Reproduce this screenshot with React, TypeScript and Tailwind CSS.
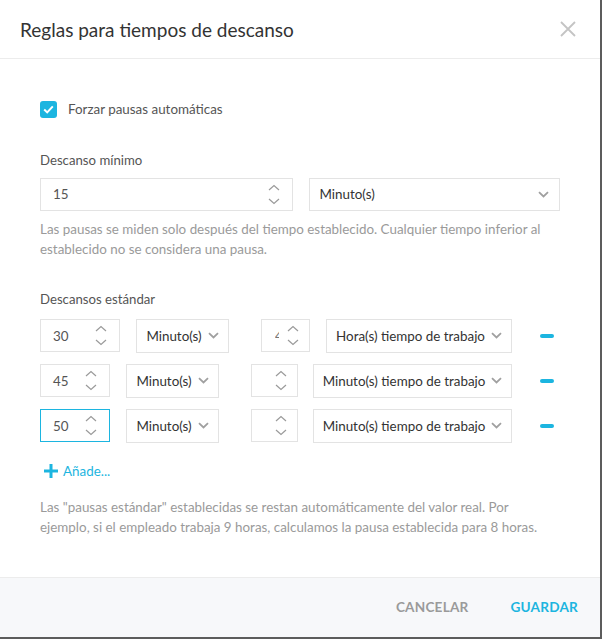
import React from "react";

const font = { fontFamily: "Lato, 'Liberation Sans', sans-serif" };

function Spinner() {
  return (
    <div className="flex flex-col items-center gap-[7px]">
      <svg width="12" height="7" viewBox="0 0 12 7" fill="none">
        <path d="M1 6L6 1.5L11 6" stroke="#9a9a9a" strokeWidth="1.2" />
      </svg>
      <svg width="12" height="7" viewBox="0 0 12 7" fill="none">
        <path d="M1 1L6 5.5L11 1" stroke="#9a9a9a" strokeWidth="1.2" />
      </svg>
    </div>
  );
}

function Chevron() {
  return (
    <svg width="11" height="7" viewBox="0 0 11 7" fill="none">
      <path d="M1 1.2L5.5 5.5L10 1.2" stroke="#a0a0a0" strokeWidth="1.8" />
    </svg>
  );
}

function NumInput({
  w,
  value,
  focus,
  padR = "pr-[12px]",
  clipped,
}: {
  w: string;
  value: string;
  focus?: boolean;
  padR?: string;
  clipped?: boolean;
}) {
  return (
    <div
      className={`${w} h-[33px] flex items-center justify-between pl-[12px] ${padR} bg-white border ${
        focus ? "border-[#1cb5e0]" : "border-[#e3e3e3]"
      }`}
    >
      {clipped ? (
        <span className="w-[4px] overflow-hidden text-[13.4px] text-[#777] ml-[1px]">4</span>
      ) : (
        <span className="text-[13.4px] text-[#555]">{value}</span>
      )}
      <Spinner />
    </div>
  );
}

function Select({ w, label }: { w: string; label: string }) {
  return (
    <div className={`${w} h-[34px] flex items-center justify-center gap-[6px] bg-white border border-[#e3e3e3]`}>
      <span className="text-[13.4px] text-[#333] whitespace-nowrap">{label}</span>
      <Chevron />
    </div>
  );
}

function Minus() {
  return <div className="w-[14px] h-[4px] rounded-[2px] bg-[#1cb5e0]" />;
}

export default function App() {
  return (
    <div className="w-[602px] h-[639px] bg-[#5c5c5c]" style={font}>
      <div className="w-[600px] h-[637px] bg-white flex flex-col">
        <div className="h-[59px] border-b border-[#ececec] flex items-center justify-between pl-[20px] pr-[24px]">
          <span className="text-[19px] text-[#333] leading-none">Reglas para tiempos de descanso</span>
          <svg width="16" height="16" viewBox="0 0 16 16" fill="none">
            <path d="M1 1L15 15M15 1L1 15" stroke="#c4c4c4" strokeWidth="1.8" />
          </svg>
        </div>

        <div className="flex flex-col px-[40px] pt-[40px]">
          <div className="flex items-center gap-[11px]">
            <div className="w-[17px] h-[17px] rounded-[3px] bg-[#1cb5e0] flex items-center justify-center">
              <svg width="11" height="9" viewBox="0 0 11 9" fill="none">
                <path d="M1.2 4.6L4.2 7.4L9.8 1.4" stroke="white" strokeWidth="2" />
              </svg>
            </div>
            <span className="text-[13.4px] text-[#555]">Forzar pausas automáticas</span>
          </div>

          <div className="mt-[32px] text-[13.2px] text-[#555]">Descanso mínimo</div>
          <div className="mt-[7px] flex gap-[16px]">
            <NumInput w="w-[253px]" value="15" />
            <div className="w-[252px] h-[33px] flex items-center justify-between px-[10px] bg-white border border-[#e3e3e3]">
              <span className="text-[13.4px] text-[#333]">Minuto(s)</span>
              <Chevron />
            </div>
          </div>
          <p className="mt-[8px] text-[13.4px] leading-[20px] text-[#9a9a9a]">
            Las pausas se miden solo después del tiempo establecido. Cualquier tiempo inferior al establecido no se
            considera una pausa.
          </p>

          <div className="mt-[31px] text-[13.2px] text-[#555]">Descansos estándar</div>
          <div className="mt-[9px] flex flex-col gap-[11px]">
            <div className="flex items-center">
              <NumInput w="w-[80px]" value="30" />
              <div className="w-[16px]" />
              <Select w="w-[93px]" label="Minuto(s)" />
              <div className="w-[32px]" />
              <NumInput w="w-[49px]" value="" padR="pr-[10px]" clipped />
              <div className="w-[16px]" />
              <Select w="w-[186px]" label="Hora(s) tiempo de trabajo" />
              <div className="w-[28px]" />
              <Minus />
            </div>
            <div className="flex items-center">
              <NumInput w="w-[70px]" value="45" />
              <div className="w-[16px]" />
              <Select w="w-[93px]" label="Minuto(s)" />
              <div className="w-[32px]" />
              <NumInput w="w-[47px]" value="" padR="pr-[10px]" />
              <div className="w-[15px]" />
              <Select w="w-[199px]" label="Minuto(s) tiempo de trabajo" />
              <div className="w-[28px]" />
              <Minus />
            </div>
            <div className="flex items-center">
              <NumInput w="w-[70px]" value="50" focus />
              <div className="w-[16px]" />
              <Select w="w-[93px]" label="Minuto(s)" />
              <div className="w-[32px]" />
              <NumInput w="w-[47px]" value="" padR="pr-[10px]" />
              <div className="w-[15px]" />
              <Select w="w-[199px]" label="Minuto(s) tiempo de trabajo" />
              <div className="w-[28px]" />
              <Minus />
            </div>
          </div>

          <div className="mt-[18px] flex items-center gap-[5px] pl-[4px]">
            <svg width="14" height="14" viewBox="0 0 14 14">
              <path d="M5.5 0H8.5V5.5H14V8.5H8.5V14H5.5V8.5H0V5.5H5.5Z" fill="#1cb5e0" />
            </svg>
            <span className="text-[13.4px] text-[#1cb5e0]">Añade...</span>
          </div>

          <p className="mt-[16px] text-[13.4px] leading-[20px] text-[#9a9a9a]">
            Las "pausas estándar" establecidas se restan automáticamente del valor real. Por ejemplo, si el empleado
            trabaja 9 horas, calculamos la pausa establecida para 8 horas.
          </p>
        </div>

        <div className="mt-auto h-[60px] border-t border-[#ececec] bg-[#f7f8fa] flex items-center justify-end gap-[42px] pr-[22px]">
          <span className="text-[13.6px] font-bold text-[#9a9a9a] tracking-[0.2px]">CANCELAR</span>
          <span className="text-[13.6px] font-bold text-[#1cb5e0] tracking-[0.2px]">GUARDAR</span>
        </div>
      </div>
    </div>
  );
}
